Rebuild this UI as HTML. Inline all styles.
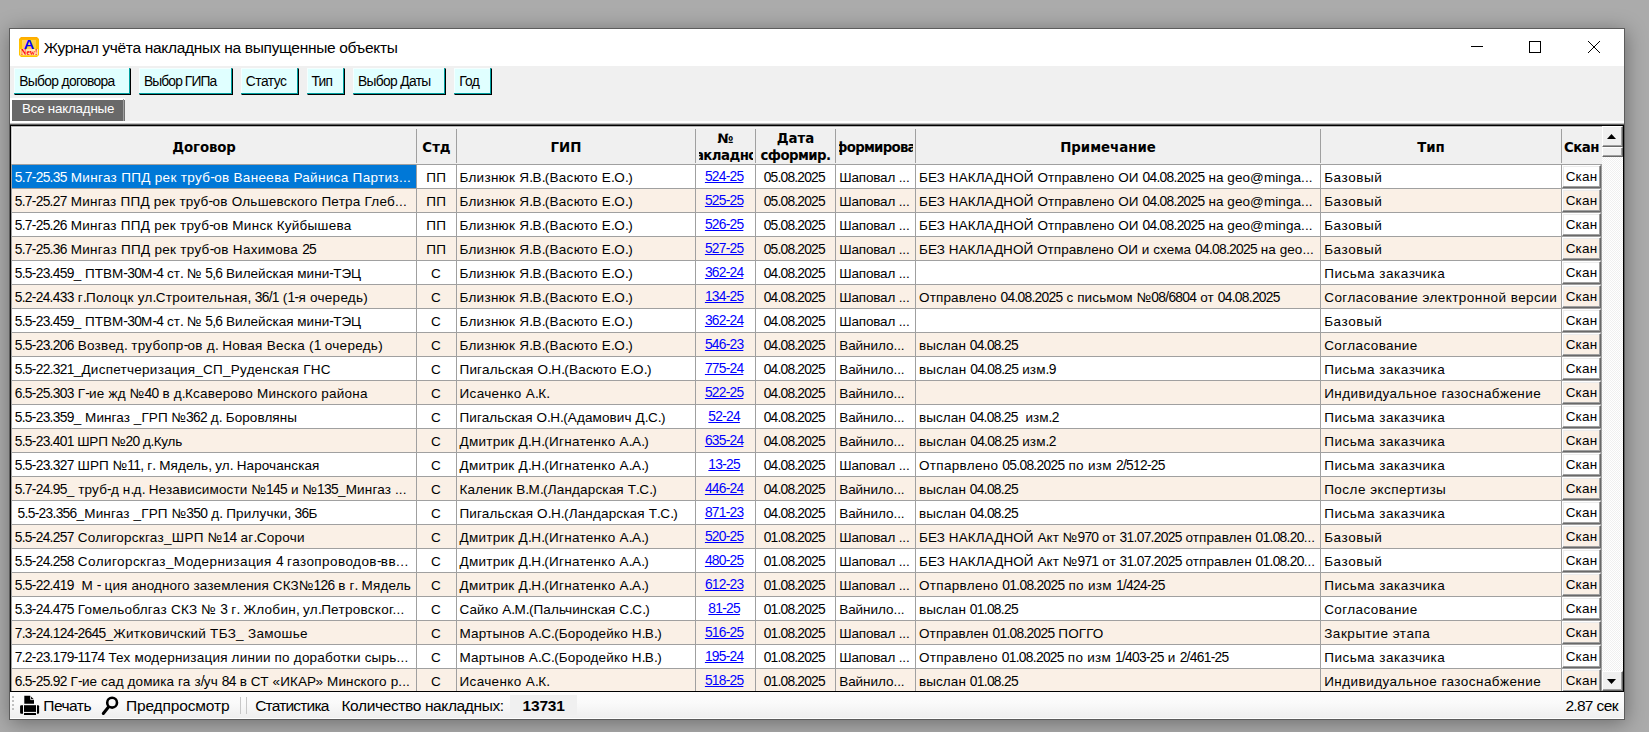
<!DOCTYPE html>
<html lang="ru"><head><meta charset="utf-8"><title>Журнал учёта накладных на выпущенные объекты</title>
<style>
html,body{margin:0;padding:0}
body{width:1649px;height:732px;overflow:hidden;position:relative;background:#ababab;font-family:"Liberation Sans","DejaVu Sans",sans-serif;color:#000}
*{box-sizing:border-box}
.a{position:absolute}
.t{position:absolute;white-space:pre;line-height:1}
#shadow{left:9px;top:28px;width:1616px;height:692px;box-shadow:1px 3px 19px 0 rgba(0,0,0,.37);background:#fff}
#win{left:9px;top:28px;width:1616px;height:692px;background:#f0f0f0;border:1px solid #5c5c5c}
#title{left:10px;top:29px;width:1614px;height:37px;background:#fff}
.btn{position:absolute;top:68px;height:27px;background:#e0ffff;border-top:1px solid #f4ffff;border-left:1px solid #f4ffff;border-right:1px solid #000;border-bottom:1px solid #000}
.btn i{position:absolute;left:-1px;top:-1px;right:0;bottom:0;border-right:1px solid #00a0a0;border-bottom:1px solid #00a0a0}
.btn span{position:absolute;left:4.6px;top:5px;font:13.8px/16px "Liberation Sans",sans-serif;white-space:pre;letter-spacing:-0.45px}
.c{position:absolute;white-space:pre;font:13.5px/23px "Liberation Sans",sans-serif;height:23px;margin-top:1px}
.lnk{position:absolute;white-space:pre;font:13.8px/23px "Liberation Sans",sans-serif;height:23px;color:#0000ff;text-decoration:underline;text-underline-offset:1px;text-align:center;letter-spacing:-0.75px;text-indent:-0.75px}
.h{position:absolute;white-space:pre;font:bold 13.33px/17px "DejaVu Sans","Liberation Sans",sans-serif;text-align:center;overflow:hidden}
.c .d,.c .nd{font-size:13.8px}
.d{letter-spacing:-0.7px}
.sb{position:absolute;font:13.5px/21px "Liberation Sans",sans-serif;text-align:center;border-top:1px solid #fff;border-left:1px solid #fff;border-right:1px solid #696969;border-bottom:1px solid #696969;box-shadow:inset -1px -1px 0 #a0a0a0,inset 1px 1px 0 #ececec;left:1551px;width:39px;height:23px;letter-spacing:0.2px}
.r3{border-top:1px solid #fff;border-left:1px solid #fff;border-right:1px solid #696969;border-bottom:1px solid #696969;box-shadow:inset -1px -1px 0 #a0a0a0;background:#f0f0f0}
.st{position:absolute;white-space:pre;font:15.5px/20px "Liberation Sans",sans-serif}
.nd .d{letter-spacing:inherit}
</style></head><body>
<div class="a" id="shadow"></div>
<div class="a" id="win"></div>
<div class="a" id="title"></div>
<svg class="a" style="left:18px;top:36px" width="22" height="22" viewBox="0 0 22 22">
<defs><linearGradient id="ig" x1="0" y1="0" x2="0" y2="1"><stop offset="0" stop-color="#ffa800"/><stop offset=".2" stop-color="#ffc000"/><stop offset="1" stop-color="#ffc400"/></linearGradient>
<linearGradient id="ih" x1="0" y1="0" x2="1" y2="1"><stop offset="0" stop-color="#ffd766"/><stop offset="1" stop-color="#ffc938"/></linearGradient></defs>
<polygon points="3,1 19,1 21,3 21,19 19,21 3,21 1,19 1,3" fill="url(#ig)"/>
<rect x="4" y="4" width="14" height="10" fill="url(#ih)"/>
<rect x="2.3" y="13" width="17.600" height="6.300" fill="#ffe7ae"/>
<text x="11.1" y="13.300" text-anchor="middle" font-family="Liberation Sans,sans-serif" font-weight="bold" font-size="12.500" fill="#0000ff" textLength="10.500" lengthAdjust="spacingAndGlyphs">A</text>
<rect x="2.3" y="13" width="17.600" height="2" fill="#ffe7ae" opacity=".55"/>
<text x="11.3" y="18.800" text-anchor="middle" font-family="Liberation Serif,serif" font-weight="bold" font-size="7.500" fill="#ff0000" textLength="16.500" lengthAdjust="spacingAndGlyphs">New!</text>
</svg>
<div class="t nd" style="left:43.7px;top:39px;font:15.5px/17px 'Liberation Sans',sans-serif;letter-spacing:-0.313px">Журнал учёта накладных на выпущенные объекты</div>
<svg class="a" style="left:1460px;top:29px" width="160" height="37" viewBox="0 0 160 37" shape-rendering="crispEdges">
<rect x="11" y="17" width="12" height="1" fill="#000"/>
<rect x="69.5" y="12.5" width="11" height="11" fill="none" stroke="#000" stroke-width="1"/>
<g shape-rendering="auto" stroke="#000" stroke-width="1"><line x1="128" y1="12" x2="140" y2="24"/><line x1="140" y1="12" x2="128" y2="24"/></g>
</svg>
<div class="btn" style="left:14px;width:117px"><i></i><span style="left:4.2px;letter-spacing:-0.649px">Выбор договора</span></div>
<div class="btn" style="left:139px;width:94px"><i></i><span style="left:4.0px;letter-spacing:-0.888px">Выбор ГИПа</span></div>
<div class="btn" style="left:241px;width:58px"><i></i><span style="left:3.8px;letter-spacing:-0.485px">Статус</span></div>
<div class="btn" style="left:307px;width:38px"><i></i><span style="left:3.6px;letter-spacing:-0.85px">Тип</span></div>
<div class="btn" style="left:353px;width:93px"><i></i><span style="left:4.0px;letter-spacing:-0.651px">Выбор Даты</span></div>
<div class="btn" style="left:454px;width:38px"><i></i><span style="left:4.2px;letter-spacing:-0.684px">Год</span></div>
<div class="a" style="left:10px;top:98px;width:115px;height:25px;background:#fff"></div><div class="a" style="left:12px;top:100px;width:113px;height:21px;background:#696969;border-right:1px solid #707070"></div><div class="a" style="left:123px;top:99px;width:1px;height:22px;background:#a0a0a0"></div><div class="t" style="left:22px;top:101px;font:13.33px/16px 'Liberation Sans',sans-serif;color:#fff;letter-spacing:-0.2px">Все накладные</div>
<div class="a" style="left:10px;top:121px;width:1614px;height:2px;background:#fff"></div><div class="a" style="left:10px;top:123px;width:1614px;height:1px;background:#c0c0c0"></div><div class="a" style="left:10px;top:124px;width:1614px;height:1px;background:#606060"></div><div class="a" style="left:10px;top:125px;width:1614px;height:567px;background:#000"></div><div class="a" style="left:11px;top:126px;width:1612px;height:565px;background:#fff;overflow:hidden" id="grid">
<div class="a" style="left:0;top:0;width:1591px;height:38px;background:#f0f0f0;border-top:1px solid #b4b4b4;border-left:1px solid #c8c8c8"></div><div class="a" style="left:1px;top:1px;width:1590px;height:1px;background:#f8f8f8"></div><div class="a" style="left:1px;top:1px;width:1px;height:37px;background:#f8f8f8"></div><div class="a" style="left:0;top:38px;width:1591px;height:1px;background:#a0a0a0"></div><div class="a" style="left:405px;top:3px;width:1px;height:34px;background:#a0a0a0"></div><div class="a" style="left:445px;top:3px;width:1px;height:34px;background:#a0a0a0"></div><div class="a" style="left:684px;top:3px;width:1px;height:34px;background:#a0a0a0"></div><div class="a" style="left:744px;top:3px;width:1px;height:34px;background:#a0a0a0"></div><div class="a" style="left:824px;top:3px;width:1px;height:34px;background:#a0a0a0"></div><div class="a" style="left:904px;top:3px;width:1px;height:34px;background:#a0a0a0"></div><div class="a" style="left:1309px;top:3px;width:1px;height:34px;background:#a0a0a0"></div><div class="a" style="left:1550px;top:3px;width:1px;height:34px;background:#a0a0a0"></div><div class="a" style="left:0;top:39px;width:1591px;height:23px;background:#fff"></div><div class="a" style="left:0;top:62px;width:1591px;height:1px;background:#a0a0a0"></div><div class="a" style="left:0;top:63px;width:1591px;height:23px;background:#faf0e6"></div><div class="a" style="left:0;top:86px;width:1591px;height:1px;background:#a0a0a0"></div><div class="a" style="left:0;top:87px;width:1591px;height:23px;background:#fff"></div><div class="a" style="left:0;top:110px;width:1591px;height:1px;background:#a0a0a0"></div><div class="a" style="left:0;top:111px;width:1591px;height:23px;background:#faf0e6"></div><div class="a" style="left:0;top:134px;width:1591px;height:1px;background:#a0a0a0"></div><div class="a" style="left:0;top:135px;width:1591px;height:23px;background:#fff"></div><div class="a" style="left:0;top:158px;width:1591px;height:1px;background:#a0a0a0"></div><div class="a" style="left:0;top:159px;width:1591px;height:23px;background:#faf0e6"></div><div class="a" style="left:0;top:182px;width:1591px;height:1px;background:#a0a0a0"></div><div class="a" style="left:0;top:183px;width:1591px;height:23px;background:#fff"></div><div class="a" style="left:0;top:206px;width:1591px;height:1px;background:#a0a0a0"></div><div class="a" style="left:0;top:207px;width:1591px;height:23px;background:#faf0e6"></div><div class="a" style="left:0;top:230px;width:1591px;height:1px;background:#a0a0a0"></div><div class="a" style="left:0;top:231px;width:1591px;height:23px;background:#fff"></div><div class="a" style="left:0;top:254px;width:1591px;height:1px;background:#a0a0a0"></div><div class="a" style="left:0;top:255px;width:1591px;height:23px;background:#faf0e6"></div><div class="a" style="left:0;top:278px;width:1591px;height:1px;background:#a0a0a0"></div><div class="a" style="left:0;top:279px;width:1591px;height:23px;background:#fff"></div><div class="a" style="left:0;top:302px;width:1591px;height:1px;background:#a0a0a0"></div><div class="a" style="left:0;top:303px;width:1591px;height:23px;background:#faf0e6"></div><div class="a" style="left:0;top:326px;width:1591px;height:1px;background:#a0a0a0"></div><div class="a" style="left:0;top:327px;width:1591px;height:23px;background:#fff"></div><div class="a" style="left:0;top:350px;width:1591px;height:1px;background:#a0a0a0"></div><div class="a" style="left:0;top:351px;width:1591px;height:23px;background:#faf0e6"></div><div class="a" style="left:0;top:374px;width:1591px;height:1px;background:#a0a0a0"></div><div class="a" style="left:0;top:375px;width:1591px;height:23px;background:#fff"></div><div class="a" style="left:0;top:398px;width:1591px;height:1px;background:#a0a0a0"></div><div class="a" style="left:0;top:399px;width:1591px;height:23px;background:#faf0e6"></div><div class="a" style="left:0;top:422px;width:1591px;height:1px;background:#a0a0a0"></div><div class="a" style="left:0;top:423px;width:1591px;height:23px;background:#fff"></div><div class="a" style="left:0;top:446px;width:1591px;height:1px;background:#a0a0a0"></div><div class="a" style="left:0;top:447px;width:1591px;height:23px;background:#faf0e6"></div><div class="a" style="left:0;top:470px;width:1591px;height:1px;background:#a0a0a0"></div><div class="a" style="left:0;top:471px;width:1591px;height:23px;background:#fff"></div><div class="a" style="left:0;top:494px;width:1591px;height:1px;background:#a0a0a0"></div><div class="a" style="left:0;top:495px;width:1591px;height:23px;background:#faf0e6"></div><div class="a" style="left:0;top:518px;width:1591px;height:1px;background:#a0a0a0"></div><div class="a" style="left:0;top:519px;width:1591px;height:23px;background:#fff"></div><div class="a" style="left:0;top:542px;width:1591px;height:1px;background:#a0a0a0"></div><div class="a" style="left:0;top:543px;width:1591px;height:23px;background:#faf0e6"></div><div class="a" style="left:0;top:566px;width:1591px;height:1px;background:#a0a0a0"></div><div class="a" style="left:1px;top:39px;width:404px;height:23px;background:#0078d7"></div><div class="a" style="left:0;top:38px;width:1px;height:530px;background:#a0a0a0"></div><div class="a" style="left:405px;top:38px;width:1px;height:530px;background:#a0a0a0"></div><div class="a" style="left:445px;top:38px;width:1px;height:530px;background:#a0a0a0"></div><div class="a" style="left:684px;top:38px;width:1px;height:530px;background:#a0a0a0"></div><div class="a" style="left:744px;top:38px;width:1px;height:530px;background:#a0a0a0"></div><div class="a" style="left:824px;top:38px;width:1px;height:530px;background:#a0a0a0"></div><div class="a" style="left:904px;top:38px;width:1px;height:530px;background:#a0a0a0"></div><div class="a" style="left:1309px;top:38px;width:1px;height:530px;background:#a0a0a0"></div><div class="a" style="left:1550px;top:38px;width:1px;height:530px;background:#a0a0a0"></div><div class="a" style="left:1590px;top:38px;width:1px;height:530px;background:#a0a0a0"></div>
<div class="h" style="left:161px;width:64px;top:13px;letter-spacing:-0.1px">Договор</div><div class="h" style="left:406px;width:39px;top:13px;">Стд</div><div class="h" style="left:535px;width:40px;top:13px;">ГИП</div><div class="h" style="left:685px;width:59px;top:4px;">№</div><div class="h" style="left:688px;width:54px;top:21px"><span style="position:relative;left:-13px;display:inline-block;width:80px;text-align:center;letter-spacing:-0.55px">накладной</span></div><div class="h" style="left:745px;width:79px;top:4px;">Дата</div><div class="h" style="left:745px;width:79px;top:21px;letter-spacing:-0.6px">сформир.</div><div class="h" style="left:828px;width:74px;top:13px"><span style="position:relative;left:-14px;display:inline-block;width:102px;text-align:center;letter-spacing:-0.75px">сформировал</span></div><div class="h" style="left:1049px;width:96px;top:13px;">Примечание</div><div class="h" style="left:1399px;width:42px;top:13px;">Тип</div><div class="h" style="left:1551px;width:39px;top:13px;letter-spacing:-0.5px">Скан</div>
<div class="c" style="left:3.7px;top:39px;letter-spacing:0.324px;color:#fff;"><span class="d">5.7-25.35</span> Мингаз ППД рек труб<span class="d">-</span>ов Ванеева Райниса Партиз...</div><div class="c" style="left:406px;width:38px;top:39px;text-align:center;letter-spacing:0.3px;text-indent:0.3px">ПП</div><div class="c" style="left:448.5px;top:39px;letter-spacing:0.27px;">Близнюк Я<span class="d">.</span>В<span class="d">.</span>(Васюто Е<span class="d">.</span>О<span class="d">.</span>)</div><div class="lnk" style="left:684px;width:59px;top:39px">524-25</div><div class="c" style="left:752.7px;top:39px;letter-spacing:-0.785px;"><span class="nd">05.08.2025</span></div><div class="c" style="left:828.2px;top:39px;letter-spacing:-0.161px;">Шаповал ...</div><div class="c" style="left:908.0px;top:39px;letter-spacing:0.082px;">БЕЗ НАКЛАДНОЙ Отправлено ОИ <span class="d">04.08.2025</span> на geo@minga...</div><div class="c" style="left:1313.2px;top:39px;letter-spacing:0.569px;">Базовый</div><div class="sb" style="top:39px;background:#fff">Скан</div>
<div class="c" style="left:3.7px;top:63px;letter-spacing:0.242px;"><span class="d">5.7-25.27</span> Мингаз ППД рек труб<span class="d">-</span>ов Ольшевского Петра Глеб...</div><div class="c" style="left:406px;width:38px;top:63px;text-align:center;letter-spacing:0.3px;text-indent:0.3px">ПП</div><div class="c" style="left:448.5px;top:63px;letter-spacing:0.27px;">Близнюк Я<span class="d">.</span>В<span class="d">.</span>(Васюто Е<span class="d">.</span>О<span class="d">.</span>)</div><div class="lnk" style="left:684px;width:59px;top:63px">525-25</div><div class="c" style="left:752.7px;top:63px;letter-spacing:-0.785px;"><span class="nd">05.08.2025</span></div><div class="c" style="left:828.2px;top:63px;letter-spacing:-0.161px;">Шаповал ...</div><div class="c" style="left:908.0px;top:63px;letter-spacing:0.082px;">БЕЗ НАКЛАДНОЙ Отправлено ОИ <span class="d">04.08.2025</span> на geo@minga...</div><div class="c" style="left:1313.2px;top:63px;letter-spacing:0.569px;">Базовый</div><div class="sb" style="top:63px;background:#faf0e6">Скан</div>
<div class="c" style="left:3.7px;top:87px;letter-spacing:0.272px;"><span class="d">5.7-25.26</span> Мингаз ППД рек труб<span class="d">-</span>ов Минск Куйбышева</div><div class="c" style="left:406px;width:38px;top:87px;text-align:center;letter-spacing:0.3px;text-indent:0.3px">ПП</div><div class="c" style="left:448.5px;top:87px;letter-spacing:0.27px;">Близнюк Я<span class="d">.</span>В<span class="d">.</span>(Васюто Е<span class="d">.</span>О<span class="d">.</span>)</div><div class="lnk" style="left:684px;width:59px;top:87px">526-25</div><div class="c" style="left:752.7px;top:87px;letter-spacing:-0.785px;"><span class="nd">05.08.2025</span></div><div class="c" style="left:828.2px;top:87px;letter-spacing:-0.161px;">Шаповал ...</div><div class="c" style="left:908.0px;top:87px;letter-spacing:0.082px;">БЕЗ НАКЛАДНОЙ Отправлено ОИ <span class="d">04.08.2025</span> на geo@minga...</div><div class="c" style="left:1313.2px;top:87px;letter-spacing:0.569px;">Базовый</div><div class="sb" style="top:87px;background:#fff">Скан</div>
<div class="c" style="left:3.7px;top:111px;letter-spacing:0.294px;"><span class="d">5.7-25.36</span> Мингаз ППД рек труб<span class="d">-</span>ов Нахимова <span class="d">25</span></div><div class="c" style="left:406px;width:38px;top:111px;text-align:center;letter-spacing:0.3px;text-indent:0.3px">ПП</div><div class="c" style="left:448.5px;top:111px;letter-spacing:0.27px;">Близнюк Я<span class="d">.</span>В<span class="d">.</span>(Васюто Е<span class="d">.</span>О<span class="d">.</span>)</div><div class="lnk" style="left:684px;width:59px;top:111px">527-25</div><div class="c" style="left:752.7px;top:111px;letter-spacing:-0.785px;"><span class="nd">05.08.2025</span></div><div class="c" style="left:828.2px;top:111px;letter-spacing:-0.161px;">Шаповал ...</div><div class="c" style="left:908.0px;top:111px;letter-spacing:0.058px;">БЕЗ НАКЛАДНОЙ Отправлено ОИ и схема <span class="d">04.08.2025</span> на geo...</div><div class="c" style="left:1313.2px;top:111px;letter-spacing:0.569px;">Базовый</div><div class="sb" style="top:111px;background:#faf0e6">Скан</div>
<div class="c" style="left:3.7px;top:135px;letter-spacing:0.022px;"><span class="d">5.5-23.459</span>_ ПТВМ<span class="d">-30</span>М<span class="d">-4</span> ст<span class="d">.</span> № <span class="d">5,6</span> Вилейская мини<span class="d">-</span>ТЭЦ</div><div class="c" style="left:406px;width:38px;top:135px;text-align:center;letter-spacing:0.3px;text-indent:0.3px">С</div><div class="c" style="left:448.5px;top:135px;letter-spacing:0.27px;">Близнюк Я<span class="d">.</span>В<span class="d">.</span>(Васюто Е<span class="d">.</span>О<span class="d">.</span>)</div><div class="lnk" style="left:684px;width:59px;top:135px">362-24</div><div class="c" style="left:752.7px;top:135px;letter-spacing:-0.785px;"><span class="nd">04.08.2025</span></div><div class="c" style="left:828.2px;top:135px;letter-spacing:-0.161px;">Шаповал ...</div><div class="c" style="left:1313.2px;top:135px;letter-spacing:0.516px;">Письма заказчика</div><div class="sb" style="top:135px;background:#fff">Скан</div>
<div class="c" style="left:3.7px;top:159px;letter-spacing:0.262px;"><span class="d">5.2-24.433</span> г<span class="d">.</span>Полоцк ул<span class="d">.</span>Строительная<span class="d">,</span> <span class="d">36/1</span> (<span class="d">1-</span>я очередь)</div><div class="c" style="left:406px;width:38px;top:159px;text-align:center;letter-spacing:0.3px;text-indent:0.3px">С</div><div class="c" style="left:448.5px;top:159px;letter-spacing:0.27px;">Близнюк Я<span class="d">.</span>В<span class="d">.</span>(Васюто Е<span class="d">.</span>О<span class="d">.</span>)</div><div class="lnk" style="left:684px;width:59px;top:159px">134-25</div><div class="c" style="left:752.7px;top:159px;letter-spacing:-0.785px;"><span class="nd">04.08.2025</span></div><div class="c" style="left:828.2px;top:159px;letter-spacing:-0.161px;">Шаповал ...</div><div class="c" style="left:908.0px;top:159px;letter-spacing:0.133px;">Отправлено <span class="d">04.08.2025</span> с письмом №<span class="d">08/6804</span> от <span class="d">04.08.2025</span></div><div class="c" style="left:1313.2px;top:159px;letter-spacing:0.444px;">Согласование электронной версии</div><div class="sb" style="top:159px;background:#faf0e6">Скан</div>
<div class="c" style="left:3.7px;top:183px;letter-spacing:0.022px;"><span class="d">5.5-23.459</span>_ ПТВМ<span class="d">-30</span>М<span class="d">-4</span> ст<span class="d">.</span> № <span class="d">5,6</span> Вилейская мини<span class="d">-</span>ТЭЦ</div><div class="c" style="left:406px;width:38px;top:183px;text-align:center;letter-spacing:0.3px;text-indent:0.3px">С</div><div class="c" style="left:448.5px;top:183px;letter-spacing:0.27px;">Близнюк Я<span class="d">.</span>В<span class="d">.</span>(Васюто Е<span class="d">.</span>О<span class="d">.</span>)</div><div class="lnk" style="left:684px;width:59px;top:183px">362-24</div><div class="c" style="left:752.7px;top:183px;letter-spacing:-0.785px;"><span class="nd">04.08.2025</span></div><div class="c" style="left:828.2px;top:183px;letter-spacing:-0.161px;">Шаповал ...</div><div class="c" style="left:1313.2px;top:183px;letter-spacing:0.569px;">Базовый</div><div class="sb" style="top:183px;background:#fff">Скан</div>
<div class="c" style="left:3.7px;top:207px;letter-spacing:0.277px;"><span class="d">5.5-23.206</span> Возвед<span class="d">.</span> трубопр<span class="d">-</span>ов д<span class="d">.</span> Новая Веска (<span class="d">1</span> очередь)</div><div class="c" style="left:406px;width:38px;top:207px;text-align:center;letter-spacing:0.3px;text-indent:0.3px">С</div><div class="c" style="left:448.5px;top:207px;letter-spacing:0.27px;">Близнюк Я<span class="d">.</span>В<span class="d">.</span>(Васюто Е<span class="d">.</span>О<span class="d">.</span>)</div><div class="lnk" style="left:684px;width:59px;top:207px">546-23</div><div class="c" style="left:752.7px;top:207px;letter-spacing:-0.785px;"><span class="nd">04.08.2025</span></div><div class="c" style="left:828.2px;top:207px;letter-spacing:-0.049px;">Вайнило...</div><div class="c" style="left:908.0px;top:207px;letter-spacing:0.082px;">выслан <span class="d">04.08.25</span></div><div class="c" style="left:1313.2px;top:207px;letter-spacing:0.398px;">Согласование</div><div class="sb" style="top:207px;background:#faf0e6">Скан</div>
<div class="c" style="left:3.7px;top:231px;letter-spacing:0.265px;"><span class="d">5.5-22.321</span>_Диспетчеризация_СП_Руденская ГНС</div><div class="c" style="left:406px;width:38px;top:231px;text-align:center;letter-spacing:0.3px;text-indent:0.3px">С</div><div class="c" style="left:448.5px;top:231px;letter-spacing:0.189px;">Пигальская О<span class="d">.</span>Н<span class="d">.</span>(Васюто Е<span class="d">.</span>О<span class="d">.</span>)</div><div class="lnk" style="left:684px;width:59px;top:231px">775-24</div><div class="c" style="left:752.7px;top:231px;letter-spacing:-0.785px;"><span class="nd">04.08.2025</span></div><div class="c" style="left:828.2px;top:231px;letter-spacing:-0.049px;">Вайнило...</div><div class="c" style="left:908.0px;top:231px;letter-spacing:0.136px;">выслан <span class="d">04.08.25</span> изм<span class="d">.9</span></div><div class="c" style="left:1313.2px;top:231px;letter-spacing:0.516px;">Письма заказчика</div><div class="sb" style="top:231px;background:#fff">Скан</div>
<div class="c" style="left:3.7px;top:255px;letter-spacing:0.209px;"><span class="d">6.5-25.303</span> Г<span class="d">-</span>ие жд №<span class="d">40</span> в д<span class="d">.</span>Ксаверово Минского района</div><div class="c" style="left:406px;width:38px;top:255px;text-align:center;letter-spacing:0.3px;text-indent:0.3px">С</div><div class="c" style="left:448.5px;top:255px;letter-spacing:0.351px;">Исаченко А<span class="d">.</span>К<span class="d">.</span></div><div class="lnk" style="left:684px;width:59px;top:255px">522-25</div><div class="c" style="left:752.7px;top:255px;letter-spacing:-0.785px;"><span class="nd">04.08.2025</span></div><div class="c" style="left:828.2px;top:255px;letter-spacing:-0.049px;">Вайнило...</div><div class="c" style="left:1313.2px;top:255px;letter-spacing:0.456px;">Индивидуальное газоснабжение</div><div class="sb" style="top:255px;background:#faf0e6">Скан</div>
<div class="c" style="left:3.7px;top:279px;letter-spacing:0.08px;"><span class="d">5.5-23.359</span>_ Мингаз _ГРП №<span class="d">362</span> д<span class="d">.</span> Боровляны</div><div class="c" style="left:406px;width:38px;top:279px;text-align:center;letter-spacing:0.3px;text-indent:0.3px">С</div><div class="c" style="left:448.5px;top:279px;letter-spacing:0.107px;">Пигальская О<span class="d">.</span>Н<span class="d">.</span>(Адамович Д<span class="d">.</span>С<span class="d">.</span>)</div><div class="lnk" style="left:684px;width:59px;top:279px">52-24</div><div class="c" style="left:752.7px;top:279px;letter-spacing:-0.785px;"><span class="nd">04.08.2025</span></div><div class="c" style="left:828.2px;top:279px;letter-spacing:-0.049px;">Вайнило...</div><div class="c" style="left:908.0px;top:279px;letter-spacing:0.062px;">выслан <span class="d">04.08.25</span>  изм<span class="d">.2</span></div><div class="c" style="left:1313.2px;top:279px;letter-spacing:0.516px;">Письма заказчика</div><div class="sb" style="top:279px;background:#fff">Скан</div>
<div class="c" style="left:3.7px;top:303px;letter-spacing:-0.221px;"><span class="d">5.5-23.401</span> ШРП №<span class="d">20</span> д<span class="d">.</span>Куль</div><div class="c" style="left:406px;width:38px;top:303px;text-align:center;letter-spacing:0.3px;text-indent:0.3px">С</div><div class="c" style="left:448.5px;top:303px;letter-spacing:0.277px;">Дмитрик Д<span class="d">.</span>Н<span class="d">.</span>(Игнатенко А<span class="d">.</span>А<span class="d">.</span>)</div><div class="lnk" style="left:684px;width:59px;top:303px">635-24</div><div class="c" style="left:752.7px;top:303px;letter-spacing:-0.785px;"><span class="nd">04.08.2025</span></div><div class="c" style="left:828.2px;top:303px;letter-spacing:-0.049px;">Вайнило...</div><div class="c" style="left:908.0px;top:303px;letter-spacing:0.136px;">выслан <span class="d">04.08.25</span> изм<span class="d">.2</span></div><div class="c" style="left:1313.2px;top:303px;letter-spacing:0.516px;">Письма заказчика</div><div class="sb" style="top:303px;background:#faf0e6">Скан</div>
<div class="c" style="left:3.7px;top:327px;letter-spacing:0.094px;"><span class="d">5.5-23.327</span> ШРП №<span class="d">11,</span> г<span class="d">.</span> Мядель<span class="d">,</span> ул<span class="d">.</span> Нарочанская</div><div class="c" style="left:406px;width:38px;top:327px;text-align:center;letter-spacing:0.3px;text-indent:0.3px">С</div><div class="c" style="left:448.5px;top:327px;letter-spacing:0.277px;">Дмитрик Д<span class="d">.</span>Н<span class="d">.</span>(Игнатенко А<span class="d">.</span>А<span class="d">.</span>)</div><div class="lnk" style="left:684px;width:59px;top:327px">13-25</div><div class="c" style="left:752.7px;top:327px;letter-spacing:-0.785px;"><span class="nd">04.08.2025</span></div><div class="c" style="left:828.2px;top:327px;letter-spacing:-0.161px;">Шаповал ...</div><div class="c" style="left:908.0px;top:327px;letter-spacing:0.304px;">Отпарвлено <span class="d">05.08.2025</span> по изм <span class="d">2/512-25</span></div><div class="c" style="left:1313.2px;top:327px;letter-spacing:0.516px;">Письма заказчика</div><div class="sb" style="top:327px;background:#fff">Скан</div>
<div class="c" style="left:3.7px;top:351px;letter-spacing:0.149px;"><span class="d">5.7-24.95</span>_ труб<span class="d">-</span>д н<span class="d">.</span>д<span class="d">.</span> Независимости №<span class="d">145</span> и №<span class="d">135</span>_Мингаз ...</div><div class="c" style="left:406px;width:38px;top:351px;text-align:center;letter-spacing:0.3px;text-indent:0.3px">С</div><div class="c" style="left:448.5px;top:351px;letter-spacing:0.16px;">Каленик В<span class="d">.</span>М<span class="d">.</span>(Ландарская Т<span class="d">.</span>С<span class="d">.</span>)</div><div class="lnk" style="left:684px;width:59px;top:351px">446-24</div><div class="c" style="left:752.7px;top:351px;letter-spacing:-0.785px;"><span class="nd">04.08.2025</span></div><div class="c" style="left:828.2px;top:351px;letter-spacing:-0.049px;">Вайнило...</div><div class="c" style="left:908.0px;top:351px;letter-spacing:0.082px;">выслан <span class="d">04.08.25</span></div><div class="c" style="left:1313.2px;top:351px;letter-spacing:0.476px;">После экспертизы</div><div class="sb" style="top:351px;background:#faf0e6">Скан</div>
<div class="c" style="left:6.6px;top:375px;letter-spacing:0.163px;"><span class="d">5.5-23.356</span>_Мингаз _ГРП №<span class="d">350</span> д<span class="d">.</span> Прилучки<span class="d">,</span> <span class="d">36</span>Б</div><div class="c" style="left:406px;width:38px;top:375px;text-align:center;letter-spacing:0.3px;text-indent:0.3px">С</div><div class="c" style="left:448.5px;top:375px;letter-spacing:0.164px;">Пигальская О<span class="d">.</span>Н<span class="d">.</span>(Ландарская Т<span class="d">.</span>С<span class="d">.</span>)</div><div class="lnk" style="left:684px;width:59px;top:375px">871-23</div><div class="c" style="left:752.7px;top:375px;letter-spacing:-0.785px;"><span class="nd">04.08.2025</span></div><div class="c" style="left:828.2px;top:375px;letter-spacing:-0.049px;">Вайнило...</div><div class="c" style="left:908.0px;top:375px;letter-spacing:0.082px;">выслан <span class="d">04.08.25</span></div><div class="c" style="left:1313.2px;top:375px;letter-spacing:0.516px;">Письма заказчика</div><div class="sb" style="top:375px;background:#fff">Скан</div>
<div class="c" style="left:3.7px;top:399px;letter-spacing:0.283px;"><span class="d">5.5-24.257</span> Солигорскгаз_ШРП №<span class="d">14</span> аг<span class="d">.</span>Сорочи</div><div class="c" style="left:406px;width:38px;top:399px;text-align:center;letter-spacing:0.3px;text-indent:0.3px">С</div><div class="c" style="left:448.5px;top:399px;letter-spacing:0.277px;">Дмитрик Д<span class="d">.</span>Н<span class="d">.</span>(Игнатенко А<span class="d">.</span>А<span class="d">.</span>)</div><div class="lnk" style="left:684px;width:59px;top:399px">520-25</div><div class="c" style="left:752.7px;top:399px;letter-spacing:-0.785px;"><span class="nd">01.08.2025</span></div><div class="c" style="left:828.2px;top:399px;letter-spacing:-0.161px;">Шаповал ...</div><div class="c" style="left:908.0px;top:399px;letter-spacing:0.088px;">БЕЗ НАКЛАДНОЙ Акт №<span class="d">970</span> от <span class="d">31.07.2025</span> отправлен <span class="d">01.08.20</span>...</div><div class="c" style="left:1313.2px;top:399px;letter-spacing:0.569px;">Базовый</div><div class="sb" style="top:399px;background:#faf0e6">Скан</div>
<div class="c" style="left:3.7px;top:423px;letter-spacing:0.431px;"><span class="d">5.5-24.258</span> Солигорскгаз_Модернизация <span class="d">4</span> газопроводов<span class="d">-</span>вв...</div><div class="c" style="left:406px;width:38px;top:423px;text-align:center;letter-spacing:0.3px;text-indent:0.3px">С</div><div class="c" style="left:448.5px;top:423px;letter-spacing:0.277px;">Дмитрик Д<span class="d">.</span>Н<span class="d">.</span>(Игнатенко А<span class="d">.</span>А<span class="d">.</span>)</div><div class="lnk" style="left:684px;width:59px;top:423px">480-25</div><div class="c" style="left:752.7px;top:423px;letter-spacing:-0.785px;"><span class="nd">01.08.2025</span></div><div class="c" style="left:828.2px;top:423px;letter-spacing:-0.161px;">Шаповал ...</div><div class="c" style="left:908.0px;top:423px;letter-spacing:0.088px;">БЕЗ НАКЛАДНОЙ Акт №<span class="d">971</span> от <span class="d">31.07.2025</span> отправлен <span class="d">01.08.20</span>...</div><div class="c" style="left:1313.2px;top:423px;letter-spacing:0.569px;">Базовый</div><div class="sb" style="top:423px;background:#fff">Скан</div>
<div class="c" style="left:3.7px;top:447px;letter-spacing:0.137px;"><span class="d">5.5-22.419</span>  М <span class="d">-</span> ция анодного заземления СКЗ№<span class="d">126</span> в г<span class="d">.</span> Мядель</div><div class="c" style="left:406px;width:38px;top:447px;text-align:center;letter-spacing:0.3px;text-indent:0.3px">С</div><div class="c" style="left:448.5px;top:447px;letter-spacing:0.277px;">Дмитрик Д<span class="d">.</span>Н<span class="d">.</span>(Игнатенко А<span class="d">.</span>А<span class="d">.</span>)</div><div class="lnk" style="left:684px;width:59px;top:447px">612-23</div><div class="c" style="left:752.7px;top:447px;letter-spacing:-0.785px;"><span class="nd">01.08.2025</span></div><div class="c" style="left:828.2px;top:447px;letter-spacing:-0.161px;">Шаповал ...</div><div class="c" style="left:908.0px;top:447px;letter-spacing:0.304px;">Отпарвлено <span class="d">01.08.2025</span> по изм <span class="d">1/424-25</span></div><div class="c" style="left:1313.2px;top:447px;letter-spacing:0.516px;">Письма заказчика</div><div class="sb" style="top:447px;background:#faf0e6">Скан</div>
<div class="c" style="left:3.7px;top:471px;letter-spacing:0.276px;"><span class="d">5.3-24.475</span> Гомельоблгаз СКЗ № <span class="d">3</span> г<span class="d">.</span> Жлобин<span class="d">,</span> ул<span class="d">.</span>Петровског...</div><div class="c" style="left:406px;width:38px;top:471px;text-align:center;letter-spacing:0.3px;text-indent:0.3px">С</div><div class="c" style="left:448.5px;top:471px;letter-spacing:0.084px;">Сайко А<span class="d">.</span>М<span class="d">.</span>(Пальчинская С<span class="d">.</span>С<span class="d">.</span>)</div><div class="lnk" style="left:684px;width:59px;top:471px">81-25</div><div class="c" style="left:752.7px;top:471px;letter-spacing:-0.785px;"><span class="nd">01.08.2025</span></div><div class="c" style="left:828.2px;top:471px;letter-spacing:-0.049px;">Вайнило...</div><div class="c" style="left:908.0px;top:471px;letter-spacing:0.082px;">выслан <span class="d">01.08.25</span></div><div class="c" style="left:1313.2px;top:471px;letter-spacing:0.398px;">Согласование</div><div class="sb" style="top:471px;background:#fff">Скан</div>
<div class="c" style="left:3.7px;top:495px;letter-spacing:0.297px;"><span class="d">7.3-24.124-2645</span>_Житковичский ТБЗ_ Замошье</div><div class="c" style="left:406px;width:38px;top:495px;text-align:center;letter-spacing:0.3px;text-indent:0.3px">С</div><div class="c" style="left:448.5px;top:495px;letter-spacing:0.158px;">Мартынов А<span class="d">.</span>С<span class="d">.</span>(Бородейко Н<span class="d">.</span>В<span class="d">.</span>)</div><div class="lnk" style="left:684px;width:59px;top:495px">516-25</div><div class="c" style="left:752.7px;top:495px;letter-spacing:-0.785px;"><span class="nd">01.08.2025</span></div><div class="c" style="left:828.2px;top:495px;letter-spacing:-0.161px;">Шаповал ...</div><div class="c" style="left:908.0px;top:495px;letter-spacing:0.096px;">Отправлен <span class="d">01.08.2025</span> ПОГГО</div><div class="c" style="left:1313.2px;top:495px;letter-spacing:0.529px;">Закрытие этапа</div><div class="sb" style="top:495px;background:#faf0e6">Скан</div>
<div class="c" style="left:3.7px;top:519px;letter-spacing:0.212px;"><span class="d">7.2-23.179-1174</span> Тех модернизация линии по доработки сырь...</div><div class="c" style="left:406px;width:38px;top:519px;text-align:center;letter-spacing:0.3px;text-indent:0.3px">С</div><div class="c" style="left:448.5px;top:519px;letter-spacing:0.158px;">Мартынов А<span class="d">.</span>С<span class="d">.</span>(Бородейко Н<span class="d">.</span>В<span class="d">.</span>)</div><div class="lnk" style="left:684px;width:59px;top:519px">195-24</div><div class="c" style="left:752.7px;top:519px;letter-spacing:-0.785px;"><span class="nd">01.08.2025</span></div><div class="c" style="left:828.2px;top:519px;letter-spacing:-0.161px;">Шаповал ...</div><div class="c" style="left:908.0px;top:519px;letter-spacing:0.253px;">Отправлено <span class="d">01.08.2025</span> по изм <span class="d">1/403-25</span> и <span class="d">2/461-25</span></div><div class="c" style="left:1313.2px;top:519px;letter-spacing:0.516px;">Письма заказчика</div><div class="sb" style="top:519px;background:#fff">Скан</div>
<div class="c" style="left:3.7px;top:543px;letter-spacing:0.131px;"><span class="d">6.5-25.92</span> Г<span class="d">-</span>ие сад домика га з<span class="d">/</span>уч <span class="d">84</span> в СТ «ИКАР» Минского р...</div><div class="c" style="left:406px;width:38px;top:543px;text-align:center;letter-spacing:0.3px;text-indent:0.3px">С</div><div class="c" style="left:448.5px;top:543px;letter-spacing:0.351px;">Исаченко А<span class="d">.</span>К<span class="d">.</span></div><div class="lnk" style="left:684px;width:59px;top:543px">518-25</div><div class="c" style="left:752.7px;top:543px;letter-spacing:-0.785px;"><span class="nd">01.08.2025</span></div><div class="c" style="left:828.2px;top:543px;letter-spacing:-0.049px;">Вайнило...</div><div class="c" style="left:908.0px;top:543px;letter-spacing:0.082px;">выслан <span class="d">01.08.25</span></div><div class="c" style="left:1313.2px;top:543px;letter-spacing:0.456px;">Индивидуальное газоснабжение</div><div class="sb" style="top:543px;background:#faf0e6">Скан</div>
<div class="a" style="left:1591px;top:0;width:21px;height:565px;background:repeating-conic-gradient(#fff 0 25%,#f0f0f0 0 50%) 0 0/2px 2px"></div><div class="a r3" style="left:1591px;top:0;width:21px;height:21px"></div><svg class="a" style="left:1591px;top:0" width="21" height="21" viewBox="0 0 21 21"><polygon points="5,13 14,13 9.5,8" fill="#000"/></svg><div class="a r3" style="left:1591px;top:21px;width:21px;height:10px"></div><div class="a r3" style="left:1591px;top:545px;width:21px;height:20px"></div><svg class="a" style="left:1591px;top:545px" width="21" height="20" viewBox="0 0 21 20"><polygon points="5,8 14,8 9.5,13" fill="#000"/></svg></div>
<div class="a" style="left:10px;top:692px;width:1614px;height:27px;background:linear-gradient(#fdfdfd,#fafafa 40%,#efefef 96%,#fff 96.5%)"></div><div class="a" style="left:12px;top:696px;width:2px;height:2px;background:#c0c0c0"></div><div class="a" style="left:12px;top:700px;width:2px;height:2px;background:#c0c0c0"></div><div class="a" style="left:12px;top:704px;width:2px;height:2px;background:#c0c0c0"></div><div class="a" style="left:12px;top:708px;width:2px;height:2px;background:#c0c0c0"></div><svg class="a" style="left:19px;top:695px" width="21" height="21" viewBox="0 0 21 21">
<path d="M5.3 0.800h5.900l3.800 3.800v4.200h-9.700z" fill="#000"/>
<path d="M11.600 1.2v3.400h3.400" fill="none" stroke="#fff" stroke-width="0.900" opacity=".9"/>
<path d="M2.2 10.200h1.800v8.600h-1.800a1.100 1.100 0 0 1-1.100-1.100v-6.400a1.100 1.100 0 0 1 1.100-1.100z" fill="#000"/>
<rect x="5" y="10.200" width="12" height="6.700" fill="#000"/>
<path d="M18 10.200h1a1.100 1.100 0 0 1 1.100 1.100v6.400a1.100 1.100 0 0 1-1.100 1.100h-1z" fill="#000"/>
<rect x="5" y="18" width="12" height="2" rx="0.300" fill="#000"/>
</svg>
<div class="st" style="left:43.3px;top:696px;letter-spacing:-0.516px;">Печать</div><svg class="a" style="left:101px;top:695px" width="19" height="21" viewBox="0 0 19 21">
<circle cx="11.100" cy="7.700" r="4.900" fill="none" stroke="#000" stroke-width="2.600"/>
<line x1="7.300" y1="12.300" x2="2.300" y2="18.500" stroke="#000" stroke-width="3" stroke-linecap="round"/>
</svg>
<div class="st" style="left:126px;top:696px;letter-spacing:-0.148px;">Предпросмотр</div><div class="a" style="left:240px;top:697px;width:1px;height:17px;background:#c8c8c8"></div><div class="a" style="left:246px;top:697px;width:1px;height:17px;background:#c8c8c8"></div><div class="st" style="left:255.2px;top:696px;letter-spacing:-0.801px;">Статистика</div><div class="st" style="left:341.4px;top:696px;letter-spacing:-0.368px;">Количество накладных:</div><div class="a" style="left:510px;top:695px;width:67px;height:20px;background:#f0f0f0"></div><div class="st" style="left:522.4px;top:696px;letter-spacing:-0.127px;font-weight:bold;"><span class="nd">13731</span></div><div class="st" style="left:1565.4px;top:696px;letter-spacing:-0.581px;"><span class="d">2.87</span> сек</div>
</body></html>
